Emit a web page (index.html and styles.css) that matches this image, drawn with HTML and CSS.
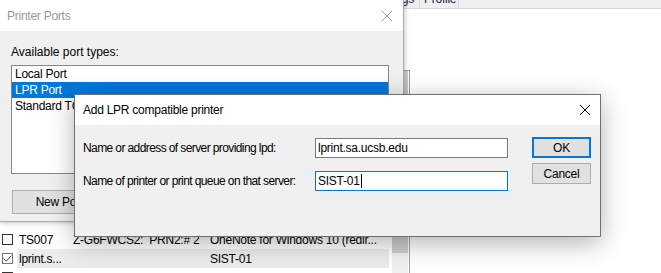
FILE: index.html
```html
<!DOCTYPE html>
<html lang="en">
<head>
  <meta charset="UTF-8" />
  <title>Add LPR compatible printer</title>
  <link rel="stylesheet" href="styles.css">
</head>
<body>

<div class="desktop">

  <!-- window in the back: tabs and port list -->
  <div class="app">
    <div class="tabs">
      <div class="tab tab-wide"><span>Printer Settings</span></div>
      <div class="tab tab-profile"><span>Profile</span></div>
    </div>

    <div class="panel">
      <div class="list">
        <div class="row">
          <div class="check-cell"><span class="check"></span></div>
          <div class="cells">
            <div class="col-name">TS007</div>
            <div class="col-port">Z-G6FWCS2:  PRN2:# 2</div>
            <div class="col-driver">OneNote for Windows 10 (redir...</div>
          </div>
        </div>
        <div class="row">
          <div class="check-cell">
            <span class="check checked">
              <svg width="9" height="9" viewBox="0 0 9 9"><path d="M0.5 4.5 L3.2 7.2 L8.5 1.5" fill="none" stroke="#555" stroke-width="1"/></svg>
            </span>
          </div>
          <div class="cells selected">
            <div class="col-name">lprint.s...</div>
            <div class="col-port"></div>
            <div class="col-driver">SIST-01</div>
          </div>
        </div>
        <div class="row">
          <div class="check-cell"><span class="check"></span></div>
          <div class="cells"></div>
        </div>
      </div>
      <div class="scrollbar"><div class="thumb"></div></div>
    </div>
  </div>

  <!-- Printer Ports dialog -->
  <div class="window ports">
    <div class="titlebar inactive">
      <span class="title">Printer Ports</span>
      <span class="close">
        <svg width="10" height="10" viewBox="0 0 10 10"><path d="M0 0 L10 10 M10 0 L0 10" stroke="#999" stroke-width="1"/></svg>
      </span>
    </div>
    <div class="ports-body">
      <div class="label">Available port types:</div>
      <div class="listbox">
        <div class="item">Local Port</div>
        <div class="item active">LPR Port</div>
        <div class="item">Standard TCP/IP Port</div>
      </div>
      <div class="btn btn-new">New Port...</div>
    </div>
  </div>

  <!-- Add LPR compatible printer dialog -->
  <div class="window lpr">
    <div class="titlebar">
      <span class="title">Add LPR compatible printer</span>
      <span class="close">
        <svg width="10" height="10" viewBox="0 0 10 10"><path d="M0 0 L10 10 M10 0 L0 10" stroke="#000" stroke-width="1"/></svg>
      </span>
    </div>
    <div class="lpr-body">
      <div class="fields">
        <div class="field-label">Name or address of server providing lpd:</div>
        <div class="field">lprint.sa.ucsb.edu</div>
        <div class="field-label">Name of printer or print queue on that server:</div>
        <div class="field focused"><span class="caret">SIST-01</span></div>
      </div>
      <div class="buttons">
        <div class="btn btn-ok">OK</div>
        <div class="btn btn-cancel">Cancel</div>
      </div>
    </div>
  </div>

</div>

</body>
</html>
```

FILE: styles.css
```css
* {
  box-sizing: border-box;
}
body {
  margin: 0;
  width: 661px;
  height: 273px;
  overflow: hidden;
  background: #fff;
  font-family: "Liberation Sans", Arial, sans-serif;
  font-size: 12px;
  letter-spacing: -0.25px;
  color: #000;
}
.desktop {
  position: relative;
  width: 661px;
  height: 273px;
  overflow: hidden;
}

/* back window */
.tabs {
  display: flex;
  height: 9px;
  background: #f0f0f0;
  border-bottom: 1px solid #d9d9d9;
  overflow: hidden;
}
.tab {
  height: 8px;
  border-right: 1px solid #d9d9d9;
  line-height: 14px;
  color: #1a1a40;
  white-space: nowrap;
  overflow: hidden;
}
.tab span {
  display: block;
  margin-top: -8px;
}
.tab-wide {
  width: 420px;
  padding-right: 5px;
  text-align: right;
}
.tab-profile {
  width: 39px;
  padding-left: 4px;
}
.panel {
  display: flex;
  width: 410px;
  height: 203px;
  margin-top: 61px;
  border-top: 1px solid #a0a0a0;
  border-right: 1px solid #a0a0a0;
}
.list {
  width: 392px;
  padding-top: 159px;
}
.row {
  display: flex;
  height: 19px;
}
.check-cell {
  width: 17px;
  display: flex;
  align-items: center;
  padding-left: 2px;
}
.check {
  width: 11px;
  height: 11px;
  border: 1px solid #333;
  display: flex;
  align-items: center;
  justify-content: center;
}
.check.checked {
  border-color: #777;
}
.cells {
  display: flex;
  align-items: center;
  width: 372px;
  white-space: pre;
}
.cells.selected {
  background: #ececec;
}
.col-name {
  width: 56px;
  padding-left: 2px;
}
.col-port {
  width: 137px;
}
.col-driver {
  flex: 1;
}
.scrollbar {
  width: 16px;
  background: #f0f0f0;
}
.thumb {
  height: 182px;
  background: #cdcdcd;
}

/* dialogs */
.window {
  position: absolute;
  background: #f0f0f0;
}
.titlebar {
  display: flex;
  align-items: center;
  justify-content: space-between;
  background: #fff;
}
.titlebar.inactive {
  color: #999;
}
.close {
  display: flex;
  align-items: center;
  justify-content: center;
  height: 100%;
}

.ports {
  left: -1px;
  top: -1px;
  width: 405px;
  height: 223px;
  border: 1px solid #aaa;
  box-shadow: 1px 1px 5px rgba(0, 0, 0, 0.22);
}
.ports .titlebar {
  height: 31px;
  padding-left: 7px;
}
.ports .close {
  width: 32px;
}
.ports-body {
  padding: 14px 0 0 11px;
}
.label {
  line-height: 14px;
  letter-spacing: 0;
}
.listbox {
  width: 378px;
  height: 109px;
  margin-top: 6px;
  background: #fff;
  border: 1px solid #828790;
}
.item {
  height: 16px;
  line-height: 16px;
  padding-left: 3px;
  white-space: nowrap;
}
.item.active {
  background: #0078d7;
  color: #fff;
}
.btn {
  display: flex;
  align-items: center;
  justify-content: center;
  background: #e1e1e1;
  border: 1px solid #adadad;
}
.btn-new {
  width: 104px;
  height: 24px;
  margin-left: 1px;
  margin-top: 16px;
}

.lpr {
  left: 74px;
  top: 94px;
  width: 527px;
  height: 143px;
  border: 1px solid #707070;
  box-shadow: 0 6px 24px rgba(0, 0, 0, 0.3);
}
.lpr .titlebar {
  height: 30px;
  padding-left: 8px;
}
.lpr .close {
  width: 30px;
}
.lpr-body {
  display: flex;
  padding: 12px 0 0 8px;
}
.fields {
  display: grid;
  grid-template-columns: 232px 193px;
  row-gap: 13px;
  align-items: center;
  margin-top: 1px;
}
.field-label {
  letter-spacing: -0.6px;
}
.field {
  height: 20px;
  line-height: 18px;
  padding-left: 2px;
  background: #fff;
  border: 1px solid #7a7a7a;
}
.field.focused {
  border-color: #0078d7;
}
.caret {
  border-right: 1px solid #000;
  padding-right: 1px;
}
.buttons {
  display: flex;
  flex-direction: column;
  gap: 5px;
  margin-left: 24px;
}
.buttons .btn {
  width: 59px;
  height: 21px;
}
.btn-ok {
  border: 2px solid #0078d7;
}
```
